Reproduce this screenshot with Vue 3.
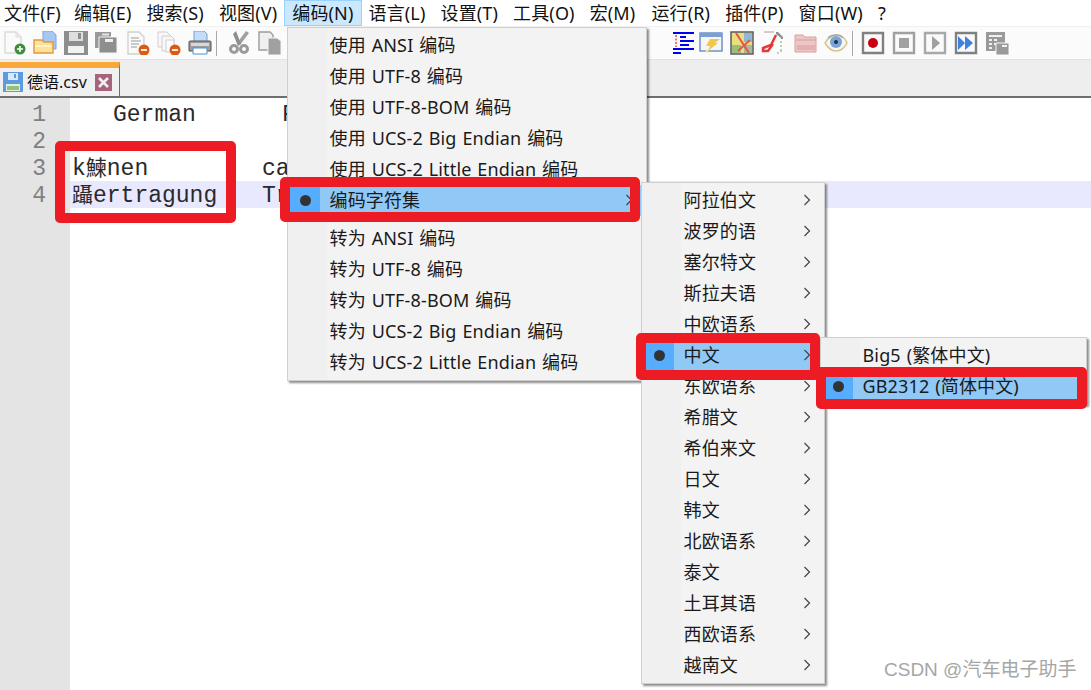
<script setup>
const menuBar = [
  { label: '文件(F)' }, { label: '编辑(E)' }, { label: '搜索(S)' }, { label: '视图(V)' },
  { label: '编码(N)', active: true }, { label: '语言(L)' }, { label: '设置(T)' }, { label: '工具(O)' },
  { label: '宏(M)' }, { label: '运行(R)' }, { label: '插件(P)' }, { label: '窗口(W)' }, { label: '?' }
]
const encodingMenu = [
  { label: '使用 ANSI 编码' }, { label: '使用 UTF-8 编码' }, { label: '使用 UTF-8-BOM 编码' },
  { label: '使用 UCS-2 Big Endian 编码' }, { label: '使用 UCS-2 Little Endian 编码' },
  { label: '编码字符集', on: true, arrow: true }, { sep: true },
  { label: '转为 ANSI 编码' }, { label: '转为 UTF-8 编码' }, { label: '转为 UTF-8-BOM 编码' },
  { label: '转为 UCS-2 Big Endian 编码' }, { label: '转为 UCS-2 Little Endian 编码' }
]
const charsetMenu = ['阿拉伯文', '波罗的语', '塞尔特文', '斯拉夫语', '中欧语系', '中文', '东欧语系', '希腊文',
  '希伯来文', '日文', '韩文', '北欧语系', '泰文', '土耳其语', '西欧语系', '越南文']
  .map(label => ({ label, arrow: true, on: label === '中文' }))
const chineseMenu = [{ label: 'Big5 (繁体中文)' }, { label: 'GB2312 (简体中文)', on: true }]
</script>

<template>
  <div class="page">
    <nav class="menubar">
      <span v-for="m in menuBar" :key="m.label" class="bar-item" :class="{ active: m.active }">{{ m.label }}</span>
    </nav>

    <div class="toolbar">
      <svg class="tb" viewBox="0 0 24 24"><path d="M3 1h11l5 5v16H3z" fill="#fafafa" stroke="#dcdcdc" stroke-width="1.5"/><path d="M14 1v5h5" fill="#e8e8e8" stroke="#dcdcdc"/><circle cx="18" cy="18" r="5.5" fill="#3f8f3a"/><path d="M18 15v6M15 18h6" stroke="#fff" stroke-width="1.6"/></svg>
      <svg class="tb" viewBox="0 0 24 24"><path d="M10 0h9l4 4v14H10z" fill="#a9c6f0" stroke="#7fa3dc"/><path d="M1 9h8l2 2h9v11H1z" fill="#fbe39a" stroke="#e8963a" stroke-width="1.4"/><path d="M2 14h17v2H2z" fill="#fff3c4"/></svg>
      <svg class="tb" viewBox="0 0 24 24"><path d="M0 0h24v24H0z" fill="#8e8e8e"/><path d="M5 1h14v9H5z" fill="#dedede"/><path d="M14 2h3v6h-3z" fill="#8e8e8e"/><path d="M4 15h16v7H4z" fill="#f2f2f2"/></svg>
      <svg class="tb" viewBox="0 0 24 24"><path d="M0 1h16v16H0z" fill="#9a9a9a"/><path d="M4 6h18v16H4z" fill="#8e8e8e" stroke="#f4f4f4"/><path d="M7 2.500h7v2H7z" fill="#e4e4e4"/><path d="M10 8h8v3h-8z" fill="#efefef"/></svg>
      <svg class="tb" viewBox="0 0 24 24"><path d="M2 1h11l5 5v17H2z" fill="#fafafa" stroke="#cfcfcf" stroke-width="1.3"/><path d="M5 7h8M5 10h10M5 13h8M5 16h6" stroke="#9a9a9a"/><circle cx="18" cy="19" r="5.5" fill="#dd5a12"/><path d="M15 19h6" stroke="#fff" stroke-width="1.8"/></svg>
      <svg class="tb" viewBox="0 0 24 24"><path d="M1 1h9l3 3v12H1z" fill="#f8f8f8" stroke="#cfcfcf"/><path d="M5 5h9l3 3v12H5z" fill="#f8f8f8" stroke="#cfcfcf"/><path d="M9 9h8v12H9z" fill="#fcfcfc" stroke="#cfcfcf"/><circle cx="18" cy="19" r="5.5" fill="#dd5a12"/><path d="M15 19h6" stroke="#fff" stroke-width="1.8"/></svg>
      <svg class="tb" viewBox="0 0 24 24"><path d="M6 0h10l3 3v9H6z" fill="#c5dcf8" stroke="#6f9fd8"/><path d="M2 10h20a1.500 1.500 0 0 1 1 2v8H1v-8a1.500 1.500 0 0 1 1-2z" fill="#9b9b9b" stroke="#555"/><path d="M3 12h18v3H3z" fill="#d8d8d8"/><path d="M5 17h14v6H5z" fill="#fff" stroke="#4f8fd0"/></svg>
      <i class="sep first"></i>
      <svg class="tb" viewBox="0 0 24 24"><path d="M19 0l3 2-9 12-3-2z" fill="#a0a0a0"/><path d="M9 0l5 13-3 2L6 3z" fill="#8e8e8e"/><circle cx="7" cy="18" r="3.500" fill="none" stroke="#9a9a9a" stroke-width="3"/><circle cx="17" cy="18" r="3.500" fill="none" stroke="#9a9a9a" stroke-width="3"/></svg>
      <svg class="tb" viewBox="0 0 24 24"><path d="M1 1h11l3 3v15H1z" fill="#efefef" stroke="#9c9c9c" stroke-width="1.4"/><path d="M10 7h9l4 3v14H10z" fill="#a0a0a0" stroke="#f4f4f4"/></svg>
      <span class="tb-gap"></span>
      <svg class="tb narrow" viewBox="0 0 8 24"><path d="M0 2h3v20H0zM4 2h3v20H4z" fill="#72a8dc"/></svg>
      <svg class="tb indent" viewBox="0 0 24 24"><path d="M1 1h21v2H1zM8 5h6v2H8zM8 9h14v2H8zM8 13h9v2H8zM1 17h21v2H1zM1 21h6v2H1zM7 21h2v2H7z" fill="#0000f0"/><path d="M4 4v12" stroke="#e02020" stroke-width="1.2" stroke-dasharray="2 1.500"/></svg>
      <svg class="tb" viewBox="0 0 24 24"><path d="M1 2h22v18H1z" fill="#f6f6f6" stroke="#6f93c8" stroke-width="1.5"/><path d="M1 2h22v4H1z" fill="#7c9fd2"/><path d="M11 8h10l-5 4h3L9 20l2-5H7z" fill="#f3c64a"/><path d="M6 21l2-3 2 1-2 3z" fill="#efe2b0"/></svg>
      <svg class="tb" viewBox="0 0 24 24"><path d="M1 1h22v22H1z" fill="#eadf7a" stroke="#5a5a6a" stroke-width="1.500"/><path d="M14 2h8v9h-8z" fill="#8cb9d8"/><path d="M2 14h9v8H2z" fill="#9cbe78"/><path d="M14 14h8v8h-8z" fill="#a8b89a"/><path d="M6 2l13 20M20 9L8 20" stroke="#e0584c" stroke-width="2"/></svg>
      <svg class="tb" viewBox="0 0 24 24"><path d="M3 1h13l6 6v16H3z" fill="#fbfbfb"/><path d="M15 1h2l5 5v2h-2V7l-5-4z" fill="#8e8e8e"/><path d="M20 10v2M20 14v2M20 18v3M16 22h2" stroke="#a9c8a0" stroke-width="1.600"/><path d="M3 1h10" stroke="#a0a0a0"/><path d="M15 4l-5 10-8 3v3h5l5-7" fill="none" stroke="#e03a3a" stroke-width="2.500"/></svg>
      <svg class="tb folder" viewBox="0 0 24 24"><path d="M1 4h8l2 2h11v15H1z" fill="#edc7c7" stroke="#dba0a0"/><path d="M2 9h20" stroke="#d89a9a"/><path d="M3 14h18v5H3z" fill="#e6b0b0"/></svg>
      <svg class="tb" viewBox="0 0 24 24"><path d="M1 12c4-7 9-8 12-8s8 2 10 8c-3 6-7 8-11 8s-8-3-11-8z" fill="#f6f6f2" stroke="#d7c28e" stroke-width="1.500"/><circle cx="12" cy="11" r="6" fill="#7ba3d4"/><circle cx="12" cy="11" r="2" fill="#1f2f4f"/><path d="M4 7c4-4 12-4 15 0" fill="none" stroke="#a8a8a8" stroke-width="1.500"/></svg>
      <i class="sep second"></i>
      <svg class="tb" viewBox="0 0 24 24"><path d="M2 2h20v20H2z" fill="#fafafa" stroke="#808080" stroke-width="2.400"/><circle cx="12" cy="12" r="5" fill="#c80010"/></svg>
      <svg class="tb" viewBox="0 0 24 24"><path d="M2 2h20v20H2z" fill="#fafafa" stroke="#a0a0a0" stroke-width="2.400"/><path d="M7 7h10v10H7z" fill="#a0a0a0"/></svg>
      <svg class="tb" viewBox="0 0 24 24"><path d="M2 2h20v20H2z" fill="#fafafa" stroke="#a8a8a8" stroke-width="2.400"/><path d="M9 5l8 7-8 7z" fill="#a0a0a0"/></svg>
      <svg class="tb" viewBox="0 0 24 24"><path d="M2 2h20v20H2z" fill="#fafafa" stroke="#808080" stroke-width="2.400"/><path d="M4 5l7 7-7 7zM11 5l8 7-8 7z" fill="#3f80e0"/></svg>
      <svg class="tb" viewBox="0 0 24 24"><path d="M1 1h19v19H1z" fill="#9a9a9a"/><path d="M4 4h13v2H4zM4 8h3v2H4zM9 8h3v2H9zM4 12h3v2H4zM9 12h3v2H9zM4 16h3v2H4z" fill="#f0f0f0"/><path d="M11 12h13v12H11z" fill="#9a9a9a" stroke="#f4f4f4"/><path d="M17 14h5v2h-5z" fill="#f0f0f0"/></svg>
    </div>

    <div class="tabbar">
      <div class="tab">
        <svg class="tab-save" viewBox="0 0 20 20"><path d="M0 0h20v20H0z" fill="#5c9be0"/><path d="M5 1h10v7H5z" fill="#dbe9f8"/><path d="M11 2h2v4h-2z" fill="#5c9be0"/><path d="M3 12h14v7H3z" fill="#e4ecdd"/><path d="M4 14h12v4H4z" fill="#8fc27c"/></svg>
        <span class="tab-name">德语.csv</span>
        <svg class="tab-close" viewBox="0 0 17 17"><path d="M0 0h17v17H0z" fill="#a5647c"/><path d="M4 4l9 9M13 4l-9 9" stroke="#f4eef0" stroke-width="2.600"/></svg>
      </div>
    </div>

    <main class="editor">
      <div class="line">
        <span class="num">1</span>
        <span class="code wide">German</span>
        <span class="code">Fr</span>
      </div>
      <div class="line">
        <span class="num">2</span>
      </div>
      <div class="line">
        <span class="num">3</span>
        <span class="code narrow-col">k<b class="cjk">鰊</b>nen</span>
        <span class="code">ca</span>
      </div>
      <div class="line current">
        <span class="num">4</span>
        <span class="code narrow-col"><b class="cjk">躡</b>ertragung</span>
        <span class="code">Tr</span>
      </div>
    </main>

    <ul class="menu main-menu">
      <template v-for="(it, i) in encodingMenu" :key="i">
        <li v-if="it.sep" class="divider"></li>
        <li v-else class="item" :class="{ on: it.on }">
          <span class="check"><i v-if="it.on" class="dot"></i></span>
          <span class="label">{{ it.label }}</span>
          <svg v-if="it.arrow" class="chev" viewBox="0 0 8 12"><path d="M1.500 1l5 5-5 5" fill="none" stroke="#444" stroke-width="1.200"/></svg>
        </li>
      </template>
    </ul>

    <ul class="menu charset-menu">
      <li v-for="it in charsetMenu" :key="it.label" class="item" :class="{ on: it.on }">
        <span class="check"><i v-if="it.on" class="dot"></i></span>
        <span class="label">{{ it.label }}</span>
        <svg class="chev" viewBox="0 0 8 12"><path d="M1.500 1l5 5-5 5" fill="none" stroke="#444" stroke-width="1.200"/></svg>
      </li>
    </ul>

    <ul class="menu chinese-menu">
      <li v-for="it in chineseMenu" :key="it.label" class="item" :class="{ on: it.on }">
        <span class="check"><i v-if="it.on" class="dot"></i></span>
        <span class="label">{{ it.label }}</span>
      </li>
    </ul>

    <i class="mark mark-text"></i>
    <i class="mark mark-charset"></i>
    <i class="mark mark-chinese"></i>
    <i class="mark mark-gb"></i>

    <span class="watermark">CSDN @汽车电子助手</span>
  </div>
</template>

<style>
html, body { margin: 0; padding: 0; background: #fff; }
</style>

<style scoped>
.page {
  position: relative;
  width: 1091px;
  height: 690px;
  overflow: hidden;
  display: flex;
  flex-direction: column;
  background: #fff;
  font-family: "Noto Sans", "Noto Sans CJK SC", sans-serif;
  color: #111;
}
.menubar {
  height: 26px;
  flex: none;
  display: flex;
  align-items: stretch;
  margin-left: -4px;
  border-bottom: 1px solid #f0f0f0;
  font-size: 18px;
  letter-spacing: 0.15px;
  line-height: 24px;
  white-space: nowrap;
}
.bar-item {
  padding: 0 7px;
  border: 1px solid transparent;
  border-bottom: 0;
  margin-right: -1px;
}
.bar-item:first-child { margin-right: -3px; }
.bar-item:nth-child(9) { padding-right: 8px; }
.bar-item.active {
  background: #cce8ff;
  border-color: #99d1ff;
  border-bottom: 1px solid #99d1ff;
}
.toolbar {
  height: 33px;
  flex: none;
  display: flex;
  align-items: center;
  background: #fbfbfb;
  border-bottom: 1px solid #e2e2e2;
  box-sizing: border-box;
  padding-left: 2px;
}
.tb {
  width: 24px;
  height: 24px;
  flex: none;
  margin-right: 7px;
}
.tb.narrow { width: 8px; margin-right: 0; }
.tb.indent { margin-left: 29px; margin-right: 3px; }
.tb.folder { margin-left: 2px; margin-right: 6px; }
.tb-gap { flex: none; width: 346px; }
.sep {
  flex: none;
  width: 1px;
  height: 25px;
  background: #a8a8a8;
}
.sep.first { margin: 0 10px 0 -3px; }
.sep.second { margin: 0 8px 0 -3px; }
.tabbar {
  height: 38px;
  flex: none;
  box-sizing: border-box;
  background: #eeeeee;
  border-bottom: 2px solid #6e6e6e;
  padding-top: 2px;
}
.tab {
  width: 120px;
  height: 34px;
  box-sizing: border-box;
  border-top: 6px solid #f9a83a;
  border-right: 1px solid #6e6e6e;
  background: #f0f0f0;
  display: flex;
  align-items: center;
  padding-left: 3px;
}
.tab-save { width: 20px; height: 20px; flex: none; }
.tab-name { font-size: 16px; margin-left: 4px; width: 68px; flex: none; line-height: 20px; }
.tab-close { width: 17px; height: 17px; flex: none; }
.editor {
  flex: 1;
  background: linear-gradient(to right, #e4e4e4 70px, #fff 70px);
  padding-top: 2px;
  font-family: "Liberation Mono", monospace;
  font-size: 23px;
  color: #2a2a2a;
}
.line {
  height: 27px;
  box-sizing: border-box;
  padding-top: 3px;
  line-height: 24px;
  display: flex;
  white-space: pre;
}
.line.current { background: linear-gradient(to right, #e4e4e4 70px, #e8e8ff 70px); }
.num {
  width: 46px;
  margin-right: 26px;
  text-align: right;
  color: #808080;
  flex: none;
}
.code.wide { width: 169px; padding-left: 41px; }
.code.narrow-col { width: 190px; }
.cjk {
  font-family: "Noto Sans CJK SC", sans-serif;
  font-weight: 400;
  font-size: 21px;
  line-height: 0;
}
.menu {
  position: absolute;
  margin: 0;
  padding: 2px 0;
  list-style: none;
  box-sizing: border-box;
  background: linear-gradient(to right, #f0f0f0 39px, #f3f3f3 39px);
  border: 1px solid #cfcfcf;
  box-shadow: 2px 2px 2px rgba(0, 0, 0, 0.45);
  font-size: 18px;
  letter-spacing: 0.15px;
  word-spacing: 1px;
  color: #1a1a1a;
}
.main-menu { left: 287px; top: 27px; width: 360px; height: 354px; }
.charset-menu { left: 641px; top: 182px; width: 184px; height: 502px; }
.chinese-menu { left: 820px; top: 337px; width: 267px; height: 68px; z-index: 1; }
.item {
  position: relative;
  height: 31px;
  display: flex;
  align-items: center;
  white-space: nowrap;
}
.item.on { background: linear-gradient(to right, #56adfe 32px, #90c8f6 32px); }
.check {
  width: 41.5px;
  flex: none;
  display: flex;
  justify-content: center;
  box-sizing: border-box;
  padding-right: 7px;
}
.dot {
  width: 11px;
  height: 11px;
  border-radius: 50%;
  background: #333;
}
.label { flex: 1; line-height: 28px; margin-top: -2px; }
.chev {
  position: absolute;
  right: 13px;
  top: 9px;
  width: 8px;
  height: 12px;
}
.divider { height: 7px; }
.mark {
  position: absolute;
  box-sizing: border-box;
  border: 10px solid #ed1c24;
  border-radius: 5px;
  z-index: 2;
}
.mark-text { left: 55px; top: 141px; width: 181px; height: 82px; }
.mark-charset { left: 280px; top: 177px; width: 360px; height: 45px; }
.mark-chinese { left: 636px; top: 333px; width: 184px; height: 47px; }
.mark-gb { left: 816px; top: 367px; width: 271px; height: 42px; }
.watermark {
  position: absolute;
  left: 884px;
  top: 657px;
  font-size: 19px;
  line-height: 26px;
  color: #a6a6a6;
  font-family: "Liberation Sans", "Noto Sans CJK SC", sans-serif;
  white-space: nowrap;
  z-index: 3;
}
</style>
